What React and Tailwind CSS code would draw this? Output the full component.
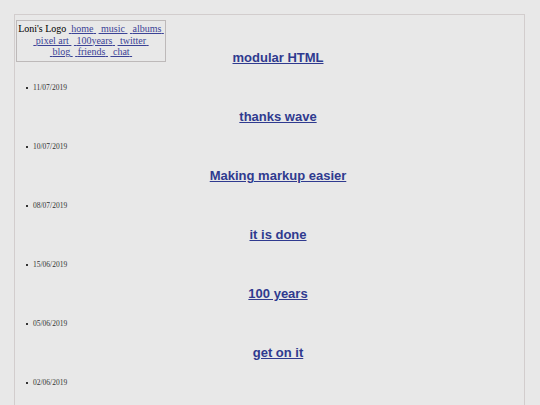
import React from 'react'

const navRows = [
  ['home', 'music', 'albums'],
  ['pixel art', '100years', 'twitter'],
  ['blog', 'friends', 'chat'],
]

const posts = [
  { title: 'modular HTML', date: '11/07/2019' },
  { title: 'thanks wave', date: '10/07/2019' },
  { title: 'Making markup easier', date: '08/07/2019' },
  { title: 'it is done', date: '15/06/2019' },
  { title: '100 years', date: '05/06/2019' },
  { title: 'get on it', date: '02/06/2019' },
]

export default function App() {
  return (
    <div className="min-h-[405px] bg-[#e8e8e8] pt-[14px] pl-[14px] pr-[15px] overflow-hidden">
      <div className="relative border border-[#d2cdcd] border-b-0 h-[400px]">
        {/* logo + nav */}
        <nav className="absolute left-[1px] top-[5px] w-[150px] border border-[#bdb9b9] pt-[2px] pb-[3px] text-center text-[10px] leading-[11.5px] text-black" style={{ fontFamily: '"Liberation Serif", serif' }}>
          {navRows.map((row, i) => (
            <div key={i} className="whitespace-nowrap">
              {i === 0 && <span>Loni's Logo </span>}
              {row.map((l, j) => (
                <React.Fragment key={l}>
                  <a href="#" className="underline text-[#3b4396]">{'\u00a0'}{l}{'\u00a0'}</a>
                  {j < row.length - 1 && ' '}
                </React.Fragment>
              ))}
            </div>
          ))}
        </nav>

        {/* posts */}
        <div className="pl-[17px] pt-[35px]">
          {posts.map((p) => (
            <div key={p.date} className="h-[59px]">
              <h2 className="text-center text-[13px] font-bold leading-[15px]" style={{ fontFamily: '"Liberation Sans", Arial, sans-serif' }}>
                <a href="#" className="underline text-[#2f3a8f]">{p.title}</a>
              </h2>
              <ul className="mt-[18px] -ml-[6px] text-[7.5px] leading-[9px] text-[#333]" style={{ fontFamily: '"Liberation Serif", serif' }}>
                <li className="flex items-center gap-[5px]">
                  <span className="inline-block w-[2px] h-[2px] bg-[#333]" />
                  {p.date}
                </li>
              </ul>
            </div>
          ))}
        </div>
      </div>
    </div>
  )
}
